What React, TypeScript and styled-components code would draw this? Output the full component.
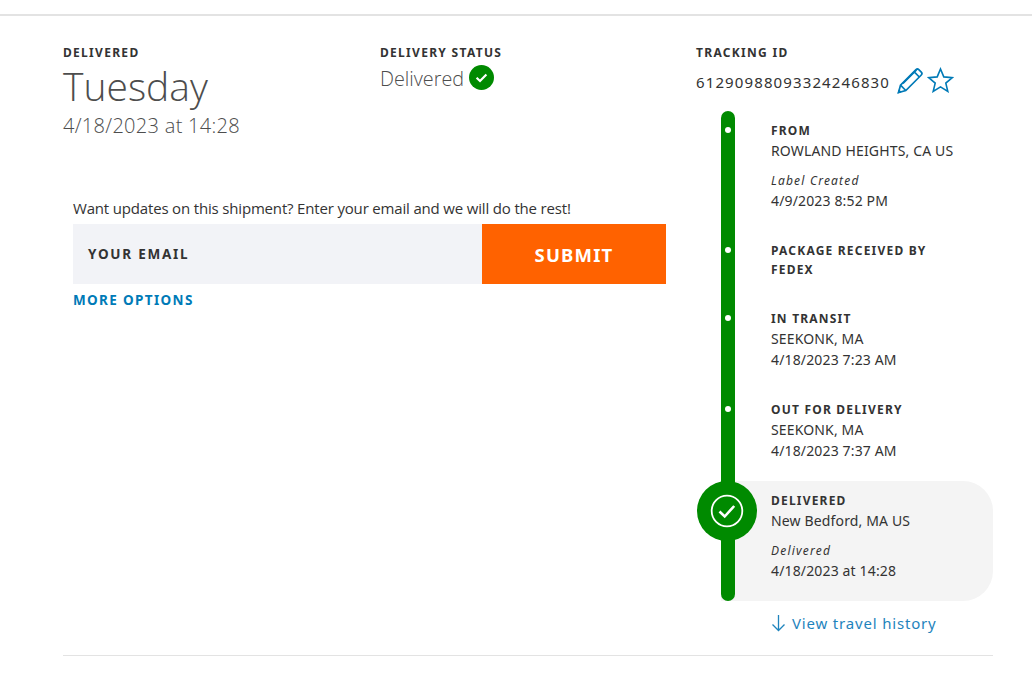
import React from "react";
import styled, { createGlobalStyle } from "styled-components";

const Global = createGlobalStyle`
  html, body { margin: 0; padding: 0; background: #fff; }
  body { font-family: "Noto Sans", "Open Sans", "Liberation Sans", sans-serif; color: #333; }
`;

const Page = styled.div`
  width: 1032px;
  height: 697px;
  overflow: hidden;
  padding-top: 14px;
  box-sizing: border-box;
`;
const TopRule = styled.div`
  height: 2px;
  background: #e3e3e3;
`;
const Content = styled.main`
  margin: 0 39px 0 63px;
  display: grid;
  grid-template-columns: 633px 297px;
  padding-top: 27px;
  height: 612px;
  border-bottom: 1px solid #e3e3e3;
`;
const Left = styled.section``;
const Summary = styled.div`
  display: grid;
  grid-template-columns: 317px 316px;
  height: 131px;
`;
const Caps = styled.div`
  font-size: 12px;
  font-weight: 700;
  letter-spacing: 1.3px;
  line-height: 20px;
  color: #333;
  height: 20px;
  white-space: nowrap;
`;
const BigDay = styled.div`
  font-family: "Open Sans", sans-serif;
  font-size: 39px;
  font-weight: 300;
  line-height: 50px;
  color: #4d4d4d;
  margin-top: -2px;
`;
const SubDate = styled.div`
  font-family: "Open Sans", sans-serif;
  font-size: 20px;
  font-weight: 300;
  letter-spacing: 0.3px;
  line-height: 24px;
  color: #4d4d4d;
  margin-top: 3px;
`;
const StatusRow = styled.div`
  display: flex;
  align-items: center;
  gap: 5px;
  height: 28px;
  margin-top: 0;
`;
const StatusText = styled.span`
  font-family: "Open Sans", sans-serif;
  font-size: 19.8px;
  font-weight: 300;
  color: #4d4d4d;
  line-height: 28px;
  margin-top: 3px;
`;
const EmailBlock = styled.form`
  margin: 22px 0 0 10px;
  width: 593px;
`;
const EmailPrompt = styled.p`
  margin: 0;
  font-family: "Open Sans", sans-serif;
  font-size: 15px;
  letter-spacing: -0.17px;
  line-height: 24px;
  font-weight: 400;
  color: #333;
  height: 28px;
  white-space: nowrap;
`;
const EmailRow = styled.div`
  display: flex;
  height: 60px;
`;
const EmailField = styled.div`
  flex: 1;
  background: #f2f3f7;
  display: flex;
  align-items: center;
  padding-left: 15px;
  font-size: 13.5px;
  font-weight: 700;
  letter-spacing: 1.75px;
  color: #333;
`;
const Submit = styled.button`
  width: 184px;
  border: 0;
  background: #ff6200;
  color: #fff;
  font-family: inherit;
  font-size: 18.5px;
  font-weight: 700;
  letter-spacing: 1.2px;
  padding: 1px 0 0;
`;
const MoreOptions = styled.a`
  display: block;
  margin-top: 6px;
  font-size: 13.5px;
  font-weight: 700;
  letter-spacing: 1.35px;
  line-height: 20px;
  color: #007ab7;
`;
const Right = styled.section``;
const TrackingRow = styled.div`
  display: flex;
  align-items: center;
  height: 28px;
  margin-top: 3px;
`;
const TrackingNumber = styled.span`
  font-size: 15px;
  letter-spacing: 1.12px;
  color: #333;
  margin-top: 3px;
  margin-right: 7px;
`;
const StarWrap = styled.span`
  display: inline-flex;
  margin-left: 3px;
`;
const Timeline = styled.ol`
  list-style: none;
  margin: 17px 0 0 25px;
  padding: 10px 0 0;
  position: relative;
  width: 272px;
`;
const Rail = styled.div`
  position: absolute;
  left: 0;
  top: 0;
  bottom: 0;
  width: 14px;
  border-radius: 7px;
  background: #008a00;
  z-index: 1;
`;
const Item = styled.li<{ $active?: boolean }>`
  position: relative;
  margin-top: ${(p) => (p.$active ? "-10px" : "0")};
  padding: ${(p) => (p.$active ? "10px 0 20px 50px" : "0 0 30px 50px")};
  background: ${(p) => (p.$active ? "#f4f4f4" : "transparent")};
  border-radius: ${(p) => (p.$active ? "0 30px 30px 0" : "0")};
`;
const Dot = styled.span`
  position: absolute;
  left: 4px;
  top: 6px;
  width: 6px;
  height: 6px;
  border-radius: 50%;
  background: #fff;
  z-index: 2;
`;
const BigCheck = styled.span`
  position: absolute;
  left: -24px;
  top: 0;
  width: 60px;
  height: 60px;
  border-radius: 50%;
  background: #008a00;
  z-index: 2;
  display: flex;
  align-items: center;
  justify-content: center;
`;
const EventLabel = styled.div`
  font-size: 12px;
  font-weight: 700;
  letter-spacing: 1.2px;
  line-height: 19px;
  color: #333;
`;
const EventText = styled.div`
  font-size: 14px;
  letter-spacing: 0.15px;
  line-height: 21px;
  color: #333;
  white-space: nowrap;
`;
const EventNote = styled.div`
  font-size: 12px;
  font-style: italic;
  letter-spacing: 1.2px;
  line-height: 19px;
  color: #333;
  margin-top: 10px;
`;
const TravelLink = styled.a`
  display: flex;
  align-items: center;
  gap: 6px;
  margin: 11px 0 0 75px;
  font-size: 15px;
  letter-spacing: 0.82px;
  line-height: 22px;
  color: #1f84bd;
  white-space: nowrap;
`;

const SmallCheck = () => (
  <svg width="25" height="25" viewBox="0 0 25 25" aria-hidden="true">
    <circle cx="12.5" cy="12.5" r="12.5" fill="#008a00" />
    <path d="M7.6 12.8l3.4 3.2 6.4-6.6" fill="none" stroke="#fff" strokeWidth="2.2" />
  </svg>
);
const Pencil = () => (
  <svg width="27" height="27" viewBox="0 0 27 27" aria-hidden="true" fill="none" stroke="#007ab7" strokeWidth="1.7">
    <path d="M1.5 25.5l2-7.3L19 2.7a2 2 0 0 1 2.8 0l2.5 2.5a2 2 0 0 1 0 2.8L8.8 23.5z" fill="none" />
    <path d="M3.5 18.2l5.3 5.3" />
    <path d="M4 24.6l-2.3.6.6-2.3" fill="#007ab7" />
    <path d="M17 4.7l5.3 5.3M6 16.5L19.5 3" />
  </svg>
);
const Star = () => (
  <svg width="27" height="26" viewBox="0 0 27 26" aria-hidden="true">
    <path d="M13.5 2l3.3 7.9 8.5.7-6.5 5.5 2 8.3-7.3-4.5-7.3 4.5 2-8.3-6.5-5.5 8.5-.7z" fill="none" stroke="#007ab7" strokeWidth="1.6" />
  </svg>
);
const RingCheck = () => (
  <svg width="34" height="34" viewBox="0 0 34 34" aria-hidden="true" fill="none" stroke="#fff">
    <circle cx="17" cy="17" r="15.3" strokeWidth="1.8" />
    <path d="M9.5 17.5l5.2 5 9.5-10.5" strokeWidth="2.6" />
  </svg>
);
const ArrowDown = () => (
  <svg width="15" height="18" viewBox="0 0 15 18" aria-hidden="true" fill="none" stroke="#1f84bd" strokeWidth="1.3">
    <path d="M7.5 1v15.5M1.5 10.5l6 6 6-6" />
  </svg>
);

export default function App() {
  return (
    <Page>
      <Global />
      <TopRule />
      <Content>
        <Left>
          <Summary>
            <div>
              <Caps>DELIVERED</Caps>
              <BigDay>Tuesday</BigDay>
              <SubDate>4/18/2023 at 14:28</SubDate>
            </div>
            <div>
              <Caps>DELIVERY STATUS</Caps>
              <StatusRow>
                <StatusText>Delivered</StatusText>
                <SmallCheck />
              </StatusRow>
            </div>
          </Summary>
          <EmailBlock>
            <EmailPrompt>Want updates on this shipment? Enter your email and we will do the rest!</EmailPrompt>
            <EmailRow>
              <EmailField>YOUR EMAIL</EmailField>
              <Submit type="button">SUBMIT</Submit>
            </EmailRow>
            <MoreOptions>MORE OPTIONS</MoreOptions>
          </EmailBlock>
        </Left>
        <Right>
          <Caps>TRACKING ID</Caps>
          <TrackingRow>
            <TrackingNumber>61290988093324246830</TrackingNumber>
            <Pencil />
            <StarWrap><Star /></StarWrap>
          </TrackingRow>
          <Timeline>
            <Rail />
            <Item>
              <Dot />
              <EventLabel>FROM</EventLabel>
              <EventText>ROWLAND HEIGHTS, CA US</EventText>
              <EventNote>Label Created</EventNote>
              <EventText>4/9/2023 8:52 PM</EventText>
            </Item>
            <Item>
              <Dot />
              <EventLabel>PACKAGE RECEIVED BY<br />FEDEX</EventLabel>
            </Item>
            <Item>
              <Dot />
              <EventLabel>IN TRANSIT</EventLabel>
              <EventText>SEEKONK, MA</EventText>
              <EventText>4/18/2023 7:23 AM</EventText>
            </Item>
            <Item>
              <Dot />
              <EventLabel>OUT FOR DELIVERY</EventLabel>
              <EventText>SEEKONK, MA</EventText>
              <EventText>4/18/2023 7:37 AM</EventText>
            </Item>
            <Item $active>
              <BigCheck><RingCheck /></BigCheck>
              <EventLabel>DELIVERED</EventLabel>
              <EventText>New Bedford, MA US</EventText>
              <EventNote>Delivered</EventNote>
              <EventText>4/18/2023 at 14:28</EventText>
            </Item>
          </Timeline>
          <TravelLink><ArrowDown />View travel history</TravelLink>
        </Right>
      </Content>
    </Page>
  );
}
